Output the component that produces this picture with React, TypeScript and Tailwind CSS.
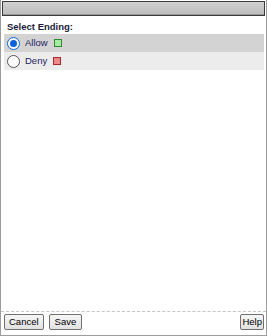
import React, { useState } from 'react'

const font = { fontFamily: '"Liberation Sans", Arial, sans-serif' }

function Radio({ checked }: { checked: boolean }) {
  return (
    <span
      className={`flex h-[13px] w-[13px] shrink-0 items-center justify-center rounded-full border bg-white ${
        checked ? 'border-[#0a64d8]' : 'border-[#555555]'
      }`}
    >
      {checked && <span className="h-[7px] w-[7px] rounded-full bg-[#0a64d8]" />}
    </span>
  )
}

export default function App() {
  const [choice, setChoice] = useState<'allow' | 'deny'>('allow')

  const options = [
    { key: 'allow' as const, label: 'Allow', swatch: 'bg-[#a6eaa6] border-[#2f8a2f]', row: 'bg-[#d3d3d3]' },
    { key: 'deny' as const, label: 'Deny', swatch: 'bg-[#f08a8a] border-[#a52a2a]', row: 'bg-[#ececec]' },
  ]

  return (
    <div
      className="flex h-[336px] w-[267px] flex-col border-x border-b border-[#9c9c9c] bg-white text-[9px]"
      style={font}
    >
      <div className="mx-px mt-px h-[15px] shrink-0 border border-[#3a3a3a] bg-gradient-to-b from-[#d0d0d0] to-[#bcbcbc] shadow-[inset_0_-1px_0_#9a9a9a]" />

      <div className="flex flex-1 flex-col pl-[3px] pr-[2px]">
        <div className="mt-[4px] h-[14px] pl-[3px] text-[9.5px] font-bold leading-[14px] text-[#1b1b3a]">
          Select Ending:
        </div>
        <div className="flex flex-col">
          {options.map((o) => (
            <button
              key={o.key}
              type="button"
              onClick={() => setChoice(o.key)}
              className={`flex h-[18px] items-center pl-[3px] text-left ${o.row}`}
            >
              <Radio checked={choice === o.key} />
              <span className="ml-[5px] text-[9.5px] text-[#1c1c5c]">{o.label}</span>
              <span className={`ml-[6px] h-[8px] w-[8px] border ${o.swatch}`} />
            </button>
          ))}
        </div>
      </div>

      <div className="flex h-[24px] shrink-0 items-start justify-between border-t border-dashed border-[#c4c4c4] pl-[3px] pr-[2px] pt-[2px]">
        <div className="flex gap-[5px]">
          <button className="h-[16px] rounded-[2px] border border-[#707070] bg-gradient-to-b from-[#f6f6f6] to-[#e2e2e2] px-[4px] text-[9.5px] leading-none text-black">
            Cancel
          </button>
          <button className="h-[16px] rounded-[2px] border border-[#707070] bg-gradient-to-b from-[#f6f6f6] to-[#e2e2e2] px-[5px] text-[9.5px] leading-none text-black">
            Save
          </button>
        </div>
        <button className="h-[16px] rounded-[2px] border border-[#707070] bg-gradient-to-b from-[#f6f6f6] to-[#e2e2e2] px-[1px] text-[9.5px] leading-none text-black">
          Help
        </button>
      </div>
    </div>
  )
}
